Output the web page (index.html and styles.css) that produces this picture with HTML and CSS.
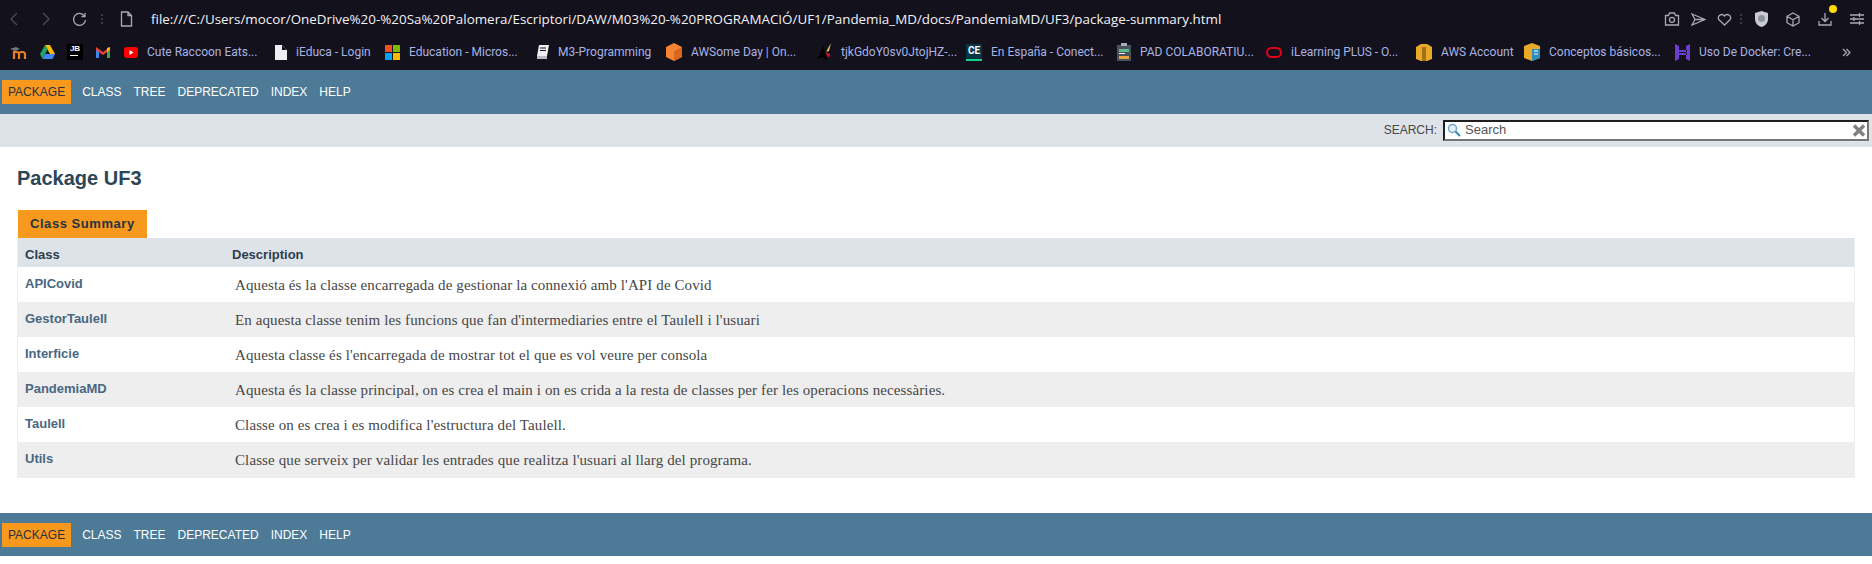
FILE: index.html
```html
<!DOCTYPE html>
<html lang="en">

<head>
	<meta charset="utf-8" />
	<title>UF3</title>
	<link rel="stylesheet" href="styles.css">
</head>

<body>
	<header class="browser">
		<div class="toolbar">
			<svg class="tool tool-back" width="9" height="14" viewBox="0 0 9 14"><path d="M8 1L2 7l6 6" /></svg>
			<svg class="tool tool-forward" width="9" height="14" viewBox="0 0 9 14"><path d="M1 1l6 6-6 6" /></svg>
			<svg class="tool tool-reload" width="15" height="15" viewBox="0 0 15 15"><path d="M12.500 4A6 6 0 1 0 13.500 8M13 1v3.500H9.500" /></svg>
			<span class="dots"></span>
			<svg class="tool" width="13" height="16" viewBox="0 0 13 16"><path d="M1.500 1h6.500l3.500 3.500V15h-10zM8 1v3.500h3.500" /></svg>
			<div class="url">file:///C:/Users/mocor/OneDrive%20-%20Sa%20Palomera/Escriptori/DAW/M03%20-%20PROGRAMACIÓ/UF1/Pandemia_MD/docs/PandemiaMD/UF3/package-summary.html</div>
			<div class="tools-right">
				<svg class="tool" width="16" height="14" viewBox="0 0 16 14"><path d="M1.500 3.500h3l1-2.500h5l1 2.500h3V13h-13z" /><circle cx="8" cy="7.800" r="2.500" /></svg>
				<svg class="tool" width="15" height="13" viewBox="0 0 15 13"><path d="M1 1l13 5.500L1 12l3-5.500zM4 6.500h10" /></svg>
				<svg class="tool" width="15" height="13" viewBox="0 0 15 13"><path d="M7.500 12L2 6.800C-.5 3.500 4.500-.5 7.500 3c3-3.500 8 .5 5.500 3.800z" /></svg>
				<span class="dots"></span>
				<svg class="shield" width="13" height="16" viewBox="0 0 13 16"><path d="M6.500 0L13 2v6c0 4-3 7-6.500 8C3 15 0 12 0 8V2z" fill="#c9ccd2" /><circle cx="6.500" cy="7.500" r="3.500" fill="#8f949c" /></svg>
				<svg class="tool spaced" width="14" height="15" viewBox="0 0 14 15"><path d="M7 1l6 3.300v6.400L7 14l-6-3.300V4.300zM1 4.300l6 3.400 6-3.400M7 7.700V14" /></svg>
				<span class="download spaced">
					<svg class="tool" width="14" height="14" viewBox="0 0 14 14"><path d="M7 1v8M3.500 6L7 9.500 10.500 6M1 9v4h12V9" /></svg>
					<span class="badge"></span>
				</span>
				<svg class="tool spaced" width="14" height="12" viewBox="0 0 14 12"><path d="M0 2h14M0 6h14M0 10h14M9.500 0v4M4 4v4M9.500 8v4" /></svg>
			</div>
		</div>
		<div class="bookmarks">
			<svg width="17" height="13" viewBox="0 0 17 13"><path d="M4 13V6h2.500a2.500 2.500 0 0 1 2.500 2.500V13M9 8.500a2.500 2.500 0 0 1 2.500-2.500h1A2.500 2.500 0 0 1 15 8.500V13" fill="none" stroke="#e67e22" stroke-width="2.200" /><path d="M0 3l6-2 4 2-5 2z" fill="#777" /></svg>
			<svg width="15" height="14" viewBox="0 0 15 14"><path d="M5 0h5l5 9h-5z" fill="#fbbc04" /><path d="M5 0l2.500 4.500L2.500 14 0 9z" fill="#1fa463" /><path d="M5 9h10l-2.500 5h-10z" fill="#4285f4" /></svg>
			<span class="jb">JB<i></i></span>
			<svg width="14" height="11" viewBox="0 0 14 11"><path d="M0 1l3 2v8H0z" fill="#4285f4" /><path d="M14 1l-3 2v8h3z" fill="#34a853" /><path d="M0 0l7 5 7-5v3L7 8 0 3z" fill="#ea4335" /><path d="M11 1l3-1v3l-3 2z" fill="#fbbc04" /></svg>
			<a class="mark"><svg width="14" height="11" viewBox="0 0 14 11"><rect width="14" height="11" rx="3" fill="#f00" /><path d="M5.500 3v5L9.500 5.500z" fill="#fff" /></svg>Cute Raccoon Eats...</a>
			<a class="mark"><svg width="12" height="15" viewBox="0 0 12 15"><path d="M0 0h7l5 5v10H0z" fill="#eceef2" /><path d="M7 0v5h5z" fill="#12111c" /></svg>iEduca - Login</a>
			<a class="mark"><svg width="15" height="15" viewBox="0 0 15 15"><path d="M0 0h7v7H0z" fill="#f25022" /><path d="M8 0h7v7H8z" fill="#7fba00" /><path d="M0 8h7v7H0z" fill="#00a4ef" /><path d="M8 8h7v7H8z" fill="#ffb900" /></svg>Education - Micros...</a>
			<a class="mark"><svg width="13" height="14" viewBox="0 0 13 14"><path d="M3 0h10l-2 11H1z" fill="#eceef2" /><path d="M1 11h10v3H1z" fill="#bbb" /><path d="M4 3h6M4 5.500h6" stroke="#12111c" /></svg>M3-Programming</a>
			<a class="mark"><svg width="16" height="18" viewBox="0 0 16 18"><path d="M8 0l8 4v10l-8 4-8-4V4z" fill="#f58534" /><path d="M8 8l8-4v10l-8 4z" fill="#d9661f" /></svg>AWSome Day | On...</a>
			<a class="mark"><svg width="16" height="18" viewBox="0 0 16 18"><path d="M7 3l2 5 6 1-5 3 1 6-4-4-6 2 3-5z" fill="#000" /><path d="M15 0l-5 9 3-1z" fill="#e8c36a" /><path d="M9 9l5 2-1 4z" fill="#e0102a" /></svg>tjkGdoY0sv0JtojHZ-...</a>
			<a class="mark"><span class="ce">CE</span>En España - Conect...</a>
			<a class="mark"><svg width="14" height="18" viewBox="0 0 14 18"><path d="M0 2h14v16H0z" fill="#47525c" /><path d="M4 0h6v3H4z" fill="#aab" /><path d="M2 6h10v3H2z" fill="#5fb98c" /><path d="M2 10h6v1H2z" fill="#eee" /><path d="M2 13h10v3H2z" fill="#e9a23b" /></svg>PAD COLABORATIU...</a>
			<a class="mark"><svg width="16" height="11" viewBox="0 0 16 11"><rect x="1" y="1" width="14" height="9" rx="4.500" fill="none" stroke="#e2001a" stroke-width="2" /></svg>iLearning PLUS - O...</a>
			<a class="mark"><svg width="16" height="17" viewBox="0 0 16 17"><path d="M0 3l5-3h6l5 3v12l-5 2H5l-5-2z" fill="#eaa92a" /><path d="M6 3h4v14H6z" fill="#a5701a" /></svg>AWS Account</a>
			<a class="mark"><svg width="16" height="18" viewBox="0 0 16 18"><path d="M0 3l8-3 8 3v12l-8 3-8-3z" fill="#eaa92a" /><path d="M8 6h8v9l-8 3z" fill="#2a8fbd" /><path d="M10 8h4M10 11h4" stroke="#fff" /></svg>Conceptos básicos...</a>
			<a class="mark"><svg width="15" height="17" viewBox="0 0 15 17"><path d="M0 0l4 2v13l-4 2zM15 0l-4 2v13l4 2zM3 6h9v2H3zM3 9h9v2H3z" fill="#6a3fd0" /></svg>Uso De Docker: Cre...</a>
			<svg class="tool" width="9" height="9" viewBox="0 0 9 9"><path d="M1 1l3.500 3.500L1 8M4.500 1L8 4.500 4.500 8" /></svg>
		</div>
	</header>

	<nav class="topnav">
		<ul class="navlist">
			<li class="current">Package</li>
			<li>Class</li>
			<li>Tree</li>
			<li>Deprecated</li>
			<li>Index</li>
			<li>Help</li>
		</ul>
	</nav>
	<div class="subnav">
		<label class="search-label">SEARCH:</label>
		<div class="search-box">
			<svg width="14" height="14" viewBox="0 0 14 14"><circle cx="5.500" cy="5.500" r="4" fill="#e4f1f8" stroke="#6ba6c6" stroke-width="1.500" /><path d="M8.500 8.500l4.500 4.500" stroke="#3b87b0" stroke-width="2" /></svg>
			<span class="search-text">Search</span>
			<svg class="search-clear" width="14" height="13" viewBox="0 0 14 13"><path d="M2 1.500l10 10M12 1.500l-10 10" stroke="#808080" stroke-width="3.500" /></svg>
		</div>
	</div>

	<main class="content">
		<h1 class="title">Package UF3</h1>
		<div class="tab"><span>Class Summary</span></div>
		<div class="summary">
			<div class="row head"><div class="col-name">Class</div><div class="col-head">Description</div></div>
			<div class="row"><a class="col-name">APICovid</a><div class="col-desc">Aquesta és la classe encarregada de gestionar la connexió amb l'API de Covid</div></div>
			<div class="row"><a class="col-name">GestorTaulell</a><div class="col-desc">En aquesta classe tenim les funcions que fan d'intermediaries entre el Taulell i l'usuari</div></div>
			<div class="row"><a class="col-name">Interficie</a><div class="col-desc">Aquesta classe és l'encarregada de mostrar tot el que es vol veure per consola</div></div>
			<div class="row"><a class="col-name">PandemiaMD</a><div class="col-desc">Aquesta és la classe principal, on es crea el main i on es crida a la resta de classes per fer les operacions necessàries.</div></div>
			<div class="row"><a class="col-name">Taulell</a><div class="col-desc">Classe on es crea i es modifica l'estructura del Taulell.</div></div>
			<div class="row"><a class="col-name">Utils</a><div class="col-desc">Classe que serveix per validar les entrades que realitza l'usuari al llarg del programa.</div></div>
		</div>
	</main>

	<footer class="topnav bottomnav">
		<ul class="navlist">
			<li class="current">Package</li>
			<li>Class</li>
			<li>Tree</li>
			<li>Deprecated</li>
			<li>Index</li>
			<li>Help</li>
		</ul>
	</footer>
</body>

</html>
```

FILE: styles.css
```css
body {
	margin: 0;
	background: #fff;
	font-family: "Liberation Sans", Arial, sans-serif;
	font-size: 14px;
	color: #474747;
	overflow: hidden;
}

/* browser chrome */
.browser {
	height: 70px;
	background: #12111c;
}

.toolbar {
	display: flex;
	align-items: center;
	height: 38px;
	padding-left: 9px;
}

.tool {
	flex: none;
	fill: none;
	stroke: #a9a8b4;
	stroke-width: 1.3;
}

.tool-back {
	stroke: #4b4a58;
}

.tool-forward {
	margin-left: 24px;
	stroke: #4b4a58;
}

.tool-reload {
	margin-left: 21px;
}

.dots {
	flex: none;
	width: 2px;
	height: 10px;
	margin: 0 17px 0 14px;
	background: repeating-linear-gradient(#3a3946 0 2px, transparent 2px 4px);
}

.url {
	margin-left: 18px;
	font-family: "Open Sans", sans-serif;
	font-size: 13.4px;
	color: #f2f2f6;
	white-space: nowrap;
}

.tools-right {
	display: flex;
	align-items: center;
	gap: 11px;
	margin-left: auto;
	padding-right: 8px;
}

.tools-right .dots {
	margin: 0 2px 0 -3px;
}

.spaced {
	margin-left: 7px;
}

.download {
	position: relative;
	display: flex;
}

.badge {
	position: absolute;
	top: -7px;
	right: -5px;
	width: 8px;
	height: 8px;
	border-radius: 50%;
	background: #ffdd00;
}

.bookmarks {
	display: grid;
	grid-template-columns: 30px 27px 29px 28px 151px 110px 151px 130px 150px 150px 151px 149px 150px 108px 151px 167px 20px;
	align-items: center;
	height: 28px;
	padding-left: 10px;
}

.mark {
	display: flex;
	align-items: center;
	gap: 9px;
	font-family: Roboto, sans-serif;
	font-size: 12px;
	color: #a9b4e4;
	white-space: nowrap;
}

.jb {
	display: flex;
	flex-direction: column;
	width: 16px;
	height: 16px;
	background: #000;
	color: #fff;
	font-size: 8px;
	font-weight: bold;
	line-height: 10px;
	text-align: center;
}

.jb i {
	width: 8px;
	height: 1px;
	margin: 1px 0 0 3px;
	background: #fff;
}

.ce {
	flex: none;
	width: 16px;
	height: 17px;
	background: #073642;
	border-bottom: 2px solid #12d18e;
	box-sizing: border-box;
	color: #fff;
	font-size: 10px;
	font-weight: bold;
	line-height: 14px;
	text-align: center;
}

/* javadoc page */
.topnav {
	height: 44px;
	background: #4d7a97;
	color: #fff;
	font-size: 12px;
}

.bottomnav {
	height: 43px;
}

.navlist {
	display: flex;
	margin: 0;
	padding: 10px 0 0 2px;
	list-style: none;
	text-transform: uppercase;
}

.navlist li {
	padding: 5px 6px;
	line-height: 14px;
}

.navlist .current {
	margin-right: 5px;
	background: #f8981d;
	color: #253441;
}

.subnav {
	display: flex;
	align-items: center;
	justify-content: flex-end;
	gap: 6px;
	height: 32px;
	padding: 0 3px 1px 0;
	background: #dee3e9;
	font-size: 12px;
}

.search-box {
	display: flex;
	align-items: center;
	width: 420px;
	height: 17px;
	padding-left: 2px;
	background: #fff;
	border: 2px solid;
	border-color: #1f1f1f #767676 #767676 #1f1f1f;
}

.search-text {
	margin: -2px 0 0 4px;
	color: #555;
	font-size: 13px;
}

.search-clear {
	margin-left: auto;
	margin-right: 1px;
}

.content {
	height: 366px;
	padding: 0 17px;
}

.title {
	margin: 0;
	padding-top: 21px;
	color: #2c4557;
	font-size: 20px;
	line-height: 21px;
}

.tab {
	display: flex;
	margin: 21px 0 0 1px;
}

.tab span {
	height: 28px;
	padding: 0 12px;
	background: #f8981d;
	color: #253441;
	font-size: 13px;
	font-weight: bold;
	line-height: 28px;
	letter-spacing: 0.55px;
}

.summary {
	border: solid #eee;
	border-width: 0 1px;
}

.row {
	display: flex;
	height: 35px;
	background: #fff;
	font-size: 13px;
}

.row:nth-child(odd) {
	background: #eee;
}

.row.head {
	height: 26px;
	padding-top: 3px;
	align-items: center;
	background: #dee3e9;
	color: #2c3e4c;
	font-weight: bold;
}

.row:last-child {
	height: 36px;
}

.col-name {
	flex: none;
	width: 207px;
	padding: 9px 0 0 7px;
	box-sizing: border-box;
	color: #4a6782;
	font-weight: bold;
	line-height: 15px;
}

.row.head .col-name {
	padding-top: 0;
	color: #2c3e4c;
}

.col-head {
	margin-left: 7px;
}

.col-desc {
	padding: 10px 0 0 10px;
	color: #474747;
	font-family: "Liberation Serif", serif;
	font-size: 15px;
	line-height: 16px;
	letter-spacing: 0.11px;
}
```
